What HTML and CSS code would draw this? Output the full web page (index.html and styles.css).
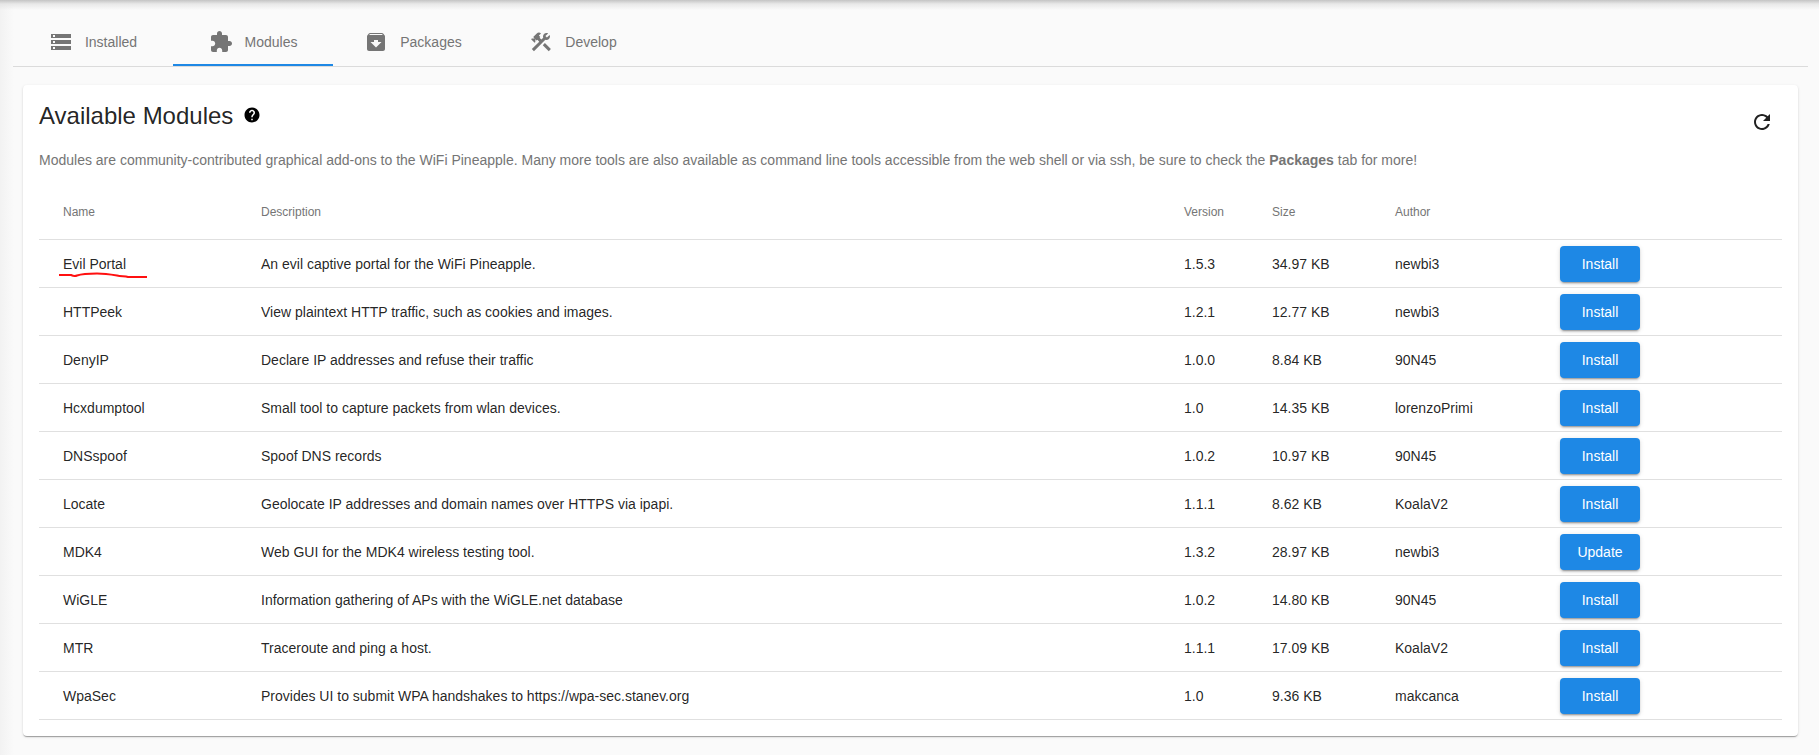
FILE: index.html
```html
<!DOCTYPE html>
<html lang="en">
<head>
<meta charset="utf-8">
<title>Modules</title>
<link rel="stylesheet" href="styles.css">
</head>
<body>
<main class="page">
  <nav class="tabs">
    <a class="tab" href="#installed">
      <svg class="icon" viewBox="0 0 24 24" aria-hidden="true"><path d="M2 20h20v-4H2v4zm2-3h2v2H4v-2zM2 4v4h20V4H2zm4 3H4V5h2v2zm-4 7h20v-4H2v4zm2-3h2v2H4v-2z"/></svg>
      <span>Installed</span>
    </a>
    <a class="tab tab-active" href="#modules" aria-current="page">
      <svg class="icon" viewBox="0 0 24 24" aria-hidden="true"><path d="M20.5 11H19V7c0-1.1-.9-2-2-2h-4V3.500C13 2.120 11.880 1 10.500 1S8 2.120 8 3.500V5H4c-1.100 0-1.990.9-1.990 2v3.800H3.500c1.490 0 2.700 1.210 2.700 2.700s-1.210 2.700-2.700 2.700H2V20c0 1.100.9 2 2 2h3.800v-1.500c0-1.490 1.210-2.700 2.700-2.700 1.490 0 2.700 1.210 2.700 2.700V22H17c1.100 0 2-.9 2-2v-4h1.500c1.380 0 2.500-1.120 2.500-2.500S21.880 11 20.500 11z"/></svg>
      <span>Modules</span>
    </a>
    <a class="tab" href="#packages">
      <svg class="icon" viewBox="0 0 24 24" aria-hidden="true"><path d="M20.540 5.230l-1.390-1.680C18.880 3.210 18.470 3 18 3H6c-.47 0-.88.21-1.160.55L3.460 5.230C3.170 5.570 3 6.020 3 6.500V19c0 1.100.9 2 2 2h14c1.100 0 2-.9 2-2V6.500c0-.48-.17-.93-.46-1.270zM12 17.500L6.500 12H10v-2h4v2h3.500L12 17.500zM5.120 5l.81-1h12l.94 1H5.120z"/></svg>
      <span>Packages</span>
    </a>
    <a class="tab" href="#develop">
      <svg class="icon" viewBox="0 0 24 24" aria-hidden="true"><path d="M13.783 15.172l2.121-2.121 5.996 5.996-2.121 2.121z"/><path d="M17.500 10c1.930 0 3.500-1.570 3.500-3.500 0-.58-.16-1.120-.41-1.600l-2.700 2.700-1.490-1.490 2.700-2.700c-.48-.25-1.020-.41-1.600-.41C15.570 3 14 4.570 14 6.500c0 .41.08.8.21 1.160l-1.850 1.850-1.780-1.780.71-.71-1.410-1.410L12 3.490c-1.170-1.170-3.070-1.170-4.240 0L4.220 7.030l1.410 1.410H2.810l-.71.71 3.540 3.540.71-.71V9.150l1.410 1.410.71-.71 1.780 1.780-7.410 7.410 2.120 2.120L16.340 9.790c.36.13.75.21 1.160.21z"/></svg>
      <span>Develop</span>
    </a>
  </nav>

  <section class="card">
    <header class="card-head">
      <div class="title-row">
        <h1 class="title">Available Modules</h1>
        <svg class="icon-help" viewBox="0 0 24 24" role="img" aria-label="Help"><path d="M12 2C6.480 2 2 6.480 2 12s4.480 10 10 10 10-4.480 10-10S17.520 2 12 2zm1 17h-2v-2h2v2zm2.070-7.750l-.9.92C13.450 12.900 13 13.500 13 15h-2v-.5c0-1.100.45-2.100 1.170-2.830l1.240-1.260c.37-.36.59-.86.59-1.410 0-1.100-.9-2-2-2s-2 .9-2 2H8c0-2.210 1.790-4 4-4s4 1.790 4 4c0 .88-.36 1.680-.93 2.250z"/></svg>
      </div>
      <button class="refresh" type="button" aria-label="Refresh">
        <svg class="icon" viewBox="0 0 24 24" aria-hidden="true"><path d="M17.650 6.350C16.200 4.900 14.210 4 12 4c-4.420 0-7.990 3.580-7.990 8s3.570 8 7.990 8c3.730 0 6.840-2.550 7.730-6h-2.080c-.82 2.330-3.040 4-5.650 4-3.310 0-6-2.690-6-6s2.690-6 6-6c1.660 0 3.140.69 4.220 1.780L13 11h7V4l-2.350 2.350z"/></svg>
      </button>
    </header>
    <p class="intro">Modules are community-contributed graphical add-ons to the WiFi Pineapple. Many more tools are also available as command line tools accessible from the web shell or via ssh, be sure to check the <strong>Packages</strong> tab for more!</p>

    <table class="modules">
      <colgroup>
        <col class="col-name"><col><col class="col-version"><col class="col-size"><col class="col-author"><col class="col-action">
      </colgroup>
      <thead>
        <tr><th>Name</th><th>Description</th><th>Version</th><th>Size</th><th>Author</th><th></th></tr>
      </thead>
      <tbody>
        <tr>
          <td><span class="marked">Evil Portal<svg class="scribble" viewBox="0 0 90 8" aria-hidden="true"><path d="M0 3H12C14 4 16 4.500 18 3.500C24 1.500 30 1.500 38 1.500C46 1.500 52 2.500 58 3.500C62 4.500 66 4 69 5H88"/></svg></span></td>
          <td>An evil captive portal for the WiFi Pineapple.</td><td>1.5.3</td><td>34.97 KB</td><td>newbi3</td><td><button class="action" type="button">Install</button></td>
        </tr>
        <tr><td>HTTPeek</td><td>View plaintext HTTP traffic, such as cookies and images.</td><td>1.2.1</td><td>12.77 KB</td><td>newbi3</td><td><button class="action" type="button">Install</button></td></tr>
        <tr><td>DenyIP</td><td>Declare IP addresses and refuse their traffic</td><td>1.0.0</td><td>8.84 KB</td><td>90N45</td><td><button class="action" type="button">Install</button></td></tr>
        <tr><td>Hcxdumptool</td><td>Small tool to capture packets from wlan devices.</td><td>1.0</td><td>14.35 KB</td><td>lorenzoPrimi</td><td><button class="action" type="button">Install</button></td></tr>
        <tr><td>DNSspoof</td><td>Spoof DNS records</td><td>1.0.2</td><td>10.97 KB</td><td>90N45</td><td><button class="action" type="button">Install</button></td></tr>
        <tr><td>Locate</td><td>Geolocate IP addresses and domain names over HTTPS via ipapi.</td><td>1.1.1</td><td>8.62 KB</td><td>KoalaV2</td><td><button class="action" type="button">Install</button></td></tr>
        <tr><td>MDK4</td><td>Web GUI for the MDK4 wireless testing tool.</td><td>1.3.2</td><td>28.97 KB</td><td>newbi3</td><td><button class="action" type="button">Update</button></td></tr>
        <tr><td>WiGLE</td><td>Information gathering of APs with the WiGLE.net database</td><td>1.0.2</td><td>14.80 KB</td><td>90N45</td><td><button class="action" type="button">Install</button></td></tr>
        <tr><td>MTR</td><td>Traceroute and ping a host.</td><td>1.1.1</td><td>17.09 KB</td><td>KoalaV2</td><td><button class="action" type="button">Install</button></td></tr>
        <tr><td>WpaSec</td><td>Provides UI to submit WPA handshakes to https://wpa-sec.stanev.org</td><td>1.0</td><td>9.36 KB</td><td>makcanca</td><td><button class="action" type="button">Install</button></td></tr>
      </tbody>
    </table>
  </section>
</main>
</body>
</html>
```

FILE: styles.css
```css
* {
  box-sizing: border-box;
}

body {
  margin: 0;
  background: #fafafa;
  color: rgba(0, 0, 0, 0.87);
  font: 14px/20px "Liberation Sans", Arial, sans-serif;
}

/* Shade cast by the toolbar above and the side menu to the left */
.page {
  min-height: 100vh;
  padding: 18px 11px 18px 13px;
  background:
    linear-gradient(to bottom, #c4c4c4, rgba(225, 225, 225, 0.7) 4px, rgba(250, 250, 250, 0) 10px),
    linear-gradient(to right, #f2f2f2, #fafafa 14px);
}

.icon {
  width: 24px;
  height: 24px;
  fill: currentColor;
}

.tabs {
  display: flex;
  border-bottom: 1px solid #dbdbdb;
}

.tab {
  display: flex;
  align-items: center;
  justify-content: center;
  gap: 12px;
  min-width: 160px;
  height: 48px;
  border-bottom: 2px solid transparent;
  padding-top: 2px;
  color: #757575;
  text-decoration: none;
}

.tab-active {
  border-bottom-color: #1e88e5;
}

.card {
  margin: 18px 10px 0;
  padding: 16px;
  border-radius: 4px;
  background: #fff;
  box-shadow:
    0 2px 1px -1px rgba(0, 0, 0, 0.2),
    0 1px 1px rgba(0, 0, 0, 0.14),
    0 1px 3px rgba(0, 0, 0, 0.12);
}

.card-head {
  display: flex;
  justify-content: space-between;
}

.title-row {
  display: flex;
  align-items: center;
  gap: 10px;
  height: 30px;
}

.title {
  margin: 0;
  font-size: 24px;
  font-weight: 400;
  line-height: 32px;
}

.icon-help {
  width: 18px;
  height: 18px;
  margin-bottom: 2px;
  fill: #000;
}

.refresh {
  display: flex;
  align-items: center;
  justify-content: center;
  width: 40px;
  height: 40px;
  margin-top: 1px;
  border: 0;
  padding: 0;
  background: none;
  color: inherit;
}

.intro {
  margin: 8px 0 13px;
  color: #757575;
}

.modules {
  width: 100%;
  table-layout: fixed;
  border-collapse: separate;
  border-spacing: 0;
}

.col-name {
  width: 222px;
}

.col-version {
  width: 88px;
}

.col-size {
  width: 123px;
}

.col-author {
  width: 165px;
}

.col-action {
  width: 222px;
}

.modules th {
  height: 57px;
  border-bottom: 1px solid #e0e0e0;
  padding: 2px 0 0;
  color: #757575;
  font-size: 12px;
  font-weight: 400;
  text-align: left;
}

.modules td {
  height: 48px;
  border-bottom: 1px solid #e0e0e0;
  padding: 0;
}

.modules th:first-child,
.modules td:first-child {
  padding-left: 24px;
}

.action {
  display: block;
  width: 80px;
  height: 36px;
  border: 0;
  border-radius: 4px;
  padding: 0;
  background: #1e88e5;
  color: #fff;
  font: inherit;
  box-shadow:
    0 3px 1px -2px rgba(0, 0, 0, 0.2),
    0 2px 2px rgba(0, 0, 0, 0.14),
    0 1px 5px rgba(0, 0, 0, 0.12);
}

.marked {
  position: relative;
}

/* Hand-drawn red underline over the row */
.scribble {
  position: absolute;
  top: 16px;
  left: -4px;
  width: 90px;
  height: 8px;
  fill: none;
  stroke: #ff1010;
  stroke-width: 2;
}
```
